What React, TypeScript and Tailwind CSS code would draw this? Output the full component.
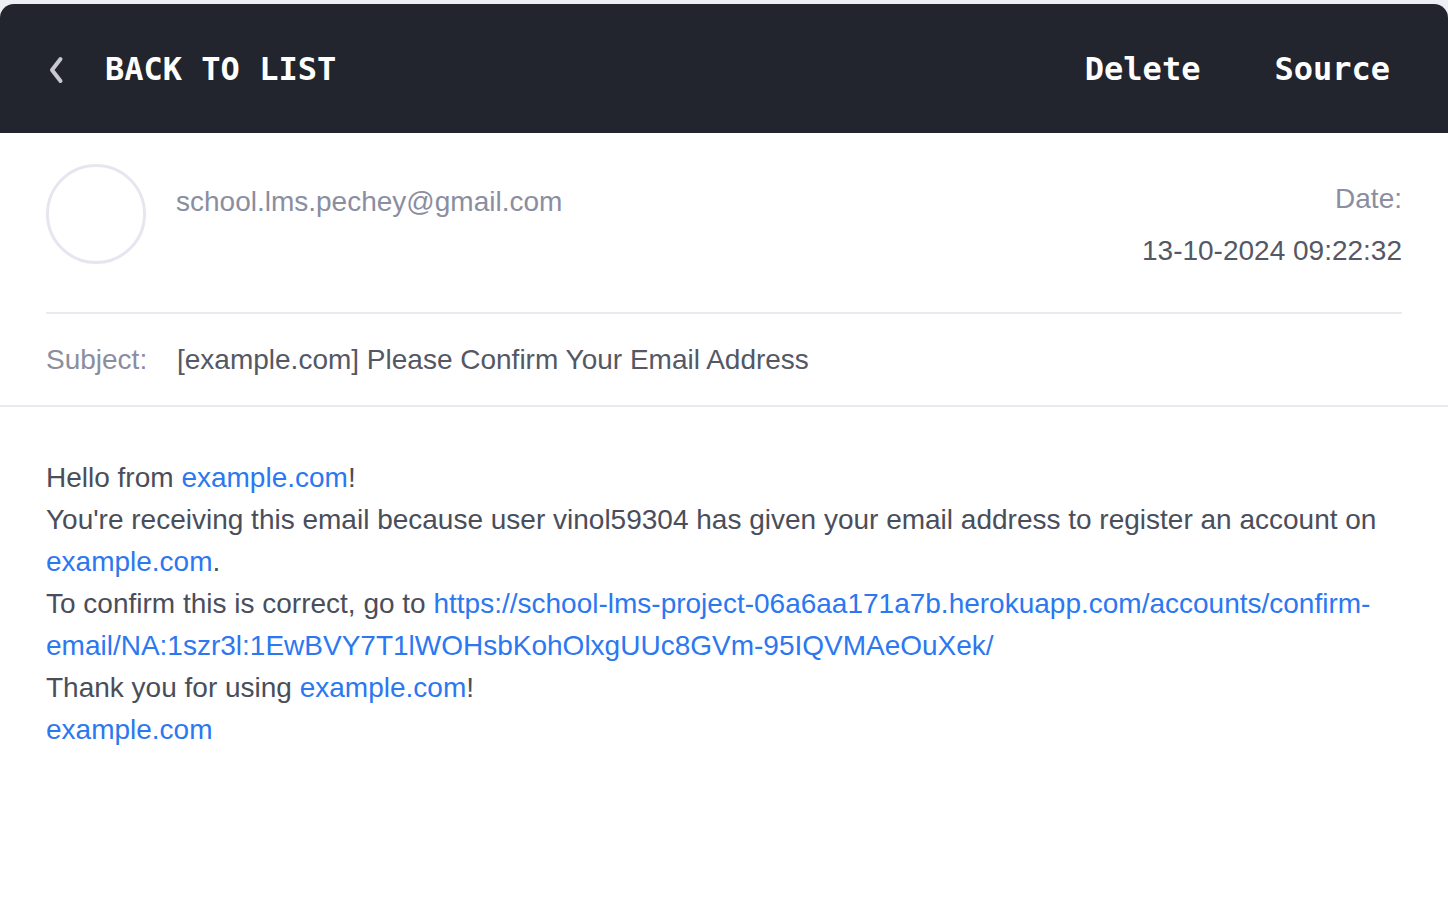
import React from "react";

const sans = { fontFamily: '"Liberation Sans", Arial, sans-serif' };

function Link({ children }: { children: React.ReactNode }) {
  return <a className="text-[#2b78f0]">{children}</a>;
}

export default function App() {
  return (
    <div className="min-h-screen bg-white">
      <div className="bg-[#eeeff5] pt-1">
        <header className="flex h-[129px] items-center rounded-t-[14px] bg-[#22252d] pl-[48px] pr-[58px] font-['DejaVu_Sans_Mono',monospace] text-[32px] font-bold text-white">
          <svg width="16" height="28" viewBox="0 0 16 28" className="mr-[41px] mt-[2px]">
            <path d="M12.5 3 L4 14 L12.5 25" fill="none" stroke="#c8c9d0" strokeWidth="4" strokeLinecap="round" strokeLinejoin="round" />
          </svg>
          <span>BACK TO LIST</span>
          <div className="ml-auto flex gap-[74px]">
            <span>Delete</span>
            <span>Source</span>
          </div>
        </header>
      </div>

      <div style={sans}>
        <div className="px-[46px]">
          <div className="flex h-[181px] items-start border-b-2 border-[#e9e9ef] pt-[31px]">
            <div className="h-[100px] w-[100px] shrink-0 rounded-full border-[3px] border-[#e6e6f0]" />
            <div className="ml-[30px] pt-[22px] text-[28px] leading-[32px] text-[#8a8ea0]">
              school.lms.pechey@gmail.com
            </div>
            <div className="ml-auto flex flex-col items-end pt-[9px] text-[28px] leading-[52px]">
              <span className="text-[#8a8ea0]">Date:</span>
              <span className="text-[#545865]">13-10-2024 09:22:32</span>
            </div>
          </div>
          <div className="flex h-[91px] items-center pt-[1px] text-[28px]">
            <span className="w-[131px] text-[#8a8ea0]">Subject:</span>
            <span className="text-[#545865]">[example.com] Please Confirm Your Email Address</span>
          </div>
        </div>
        <div className="h-[2px] bg-[#e9e9ef]" />

        <div className="px-[46px] pt-[50px] text-[28px] leading-[42px] text-[#4a4e5a]">
          <p>
            Hello from <Link>example.com</Link>!
          </p>
          <p>
            You're receiving this email because user vinol59304 has given your email address to register an account on{" "}
            <Link>example.com</Link>.
          </p>
          <p>
            To confirm this is correct, go to{" "}
            <Link>
              https://school-lms-project-06a6aa171a7b.herokuapp.com/accounts/confirm-email/NA:1szr3l:1EwBVY7T1lWOHsbKohOlxgUUc8GVm-95IQVMAeOuXek/
            </Link>
          </p>
          <p>
            Thank you for using <Link>example.com</Link>!
          </p>
          <p>
            <Link>example.com</Link>
          </p>
        </div>
      </div>
    </div>
  );
}
